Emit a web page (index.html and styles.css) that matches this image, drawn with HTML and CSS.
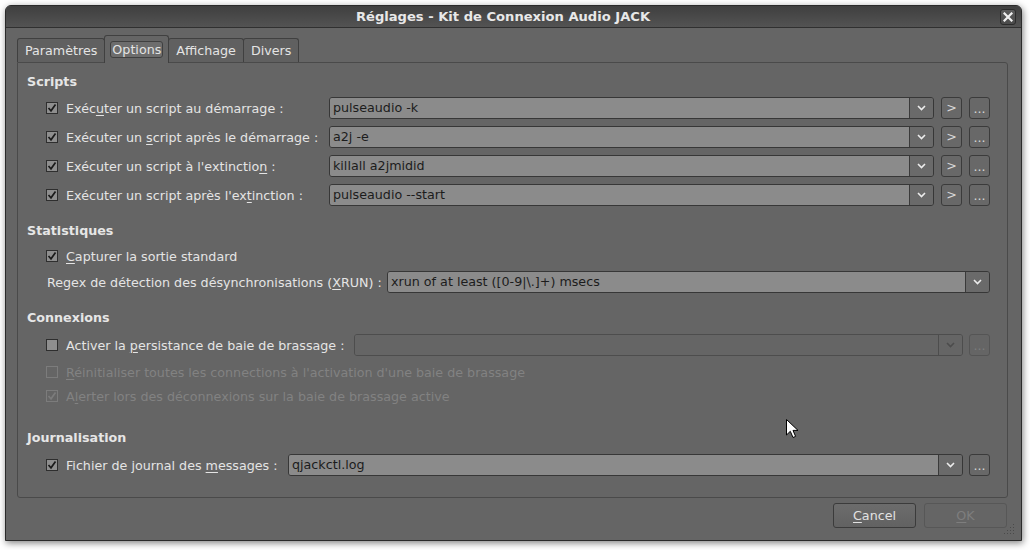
FILE: index.html
```html
<!DOCTYPE html>
<html lang="fr">
<head>
<meta charset="utf-8">
<title>Réglages - Kit de Connexion Audio JACK</title>
<link rel="stylesheet" href="styles.css">
</head>
<body>
<div class="window">
  <div class="titlebar">
    <span class="title">Réglages - Kit de Connexion Audio JACK</span>
    <span class="close"><svg width="10" height="10" viewBox="0 0 10 10"><path d="M1.5 1.5 L8.5 8.5 M8.5 1.5 L1.5 8.5" stroke="#f0f0f0" stroke-width="2.2" stroke-linecap="square"/></svg></span>
  </div>
  <div class="content">
    <div class="tabs">
      <div class="tab">Paramètres</div>
      <div class="tab active"><span class="focus">Options</span></div>
      <div class="tab">Affichage</div>
      <div class="tab">Divers</div>
    </div>
    <div class="panel">
      <div class="heading">Scripts</div>
      <div class="rows g-scripts">
        <label class="check"><svg class="cb" viewBox="0 0 12 12"><rect x="0.5" y="0.5" width="11" height="11"/><path d="M2.5 6 L5 8.8 L9.5 2.5"/></svg><span>Exéc<u>u</u>ter un script au démarrage :</span></label>
        <div class="combo"><span class="field">pulseaudio -k</span><span class="arrow"><svg width="9" height="6" viewBox="0 0 9 6"><path d="M1 1 L4.5 4.5 L8 1"/></svg></span></div>
        <button class="tb">&gt;</button>
        <button class="tb dots">...</button>

        <label class="check"><svg class="cb" viewBox="0 0 12 12"><rect x="0.5" y="0.5" width="11" height="11"/><path d="M2.5 6 L5 8.8 L9.5 2.5"/></svg><span>Exécuter un <u>s</u>cript après le démarrage :</span></label>
        <div class="combo"><span class="field">a2j -e</span><span class="arrow"><svg width="9" height="6" viewBox="0 0 9 6"><path d="M1 1 L4.5 4.5 L8 1"/></svg></span></div>
        <button class="tb">&gt;</button>
        <button class="tb dots">...</button>

        <label class="check"><svg class="cb" viewBox="0 0 12 12"><rect x="0.5" y="0.5" width="11" height="11"/><path d="M2.5 6 L5 8.8 L9.5 2.5"/></svg><span>Exécuter un script à l'extinctio<u>n</u> :</span></label>
        <div class="combo"><span class="field">killall a2jmidid</span><span class="arrow"><svg width="9" height="6" viewBox="0 0 9 6"><path d="M1 1 L4.5 4.5 L8 1"/></svg></span></div>
        <button class="tb">&gt;</button>
        <button class="tb dots">...</button>

        <label class="check"><svg class="cb" viewBox="0 0 12 12"><rect x="0.5" y="0.5" width="11" height="11"/><path d="M2.5 6 L5 8.8 L9.5 2.5"/></svg><span>Exécuter un script après l'ex<u>t</u>inction :</span></label>
        <div class="combo"><span class="field">pulseaudio --start</span><span class="arrow"><svg width="9" height="6" viewBox="0 0 9 6"><path d="M1 1 L4.5 4.5 L8 1"/></svg></span></div>
        <button class="tb">&gt;</button>
        <button class="tb dots">...</button>
      </div>

      <div class="heading h-stats">Statistiques</div>
      <label class="check row-single r-capture"><svg class="cb" viewBox="0 0 12 12"><rect x="0.5" y="0.5" width="11" height="11"/><path d="M2.5 6 L5 8.8 L9.5 2.5"/></svg><span><u>C</u>apturer la sortie standard</span></label>
      <div class="rows g-regex">
        <span class="plain">Regex de détection des désynchronisations (<u>X</u>RUN) :</span>
        <div class="combo"><span class="field">xrun of at least ([0-9|\.]+) msecs</span><span class="arrow"><svg width="9" height="6" viewBox="0 0 9 6"><path d="M1 1 L4.5 4.5 L8 1"/></svg></span></div>
      </div>

      <div class="heading h-conn">Connexions</div>
      <div class="rows g-persist">
        <label class="check"><svg class="cb off" viewBox="0 0 12 12"><rect x="0.5" y="0.5" width="11" height="11"/></svg><span>Activer la <u>p</u>ersistance de baie de brassage :</span></label>
        <div class="combo disabled"><span class="field"></span><span class="arrow"><svg width="9" height="6" viewBox="0 0 9 6"><path d="M1 1 L4.5 4.5 L8 1"/></svg></span></div>
        <button class="tb dots disabled">...</button>
      </div>
      <label class="check row-single r-reset dis"><svg class="cb" viewBox="0 0 12 12"><rect x="0.5" y="0.5" width="11" height="11"/></svg><span><u>R</u>éinitialiser toutes les connections à l'activation d'une baie de brassage</span></label>
      <label class="check row-single r-alert dis"><svg class="cb" viewBox="0 0 12 12"><rect x="0.5" y="0.5" width="11" height="11"/><path d="M2.5 6 L5 8.8 L9.5 2.5"/></svg><span>A<u>l</u>erter lors des déconnexions sur la baie de brassage active</span></label>

      <div class="heading h-log">Journalisation</div>
      <div class="rows g-log">
        <label class="check"><svg class="cb" viewBox="0 0 12 12"><rect x="0.5" y="0.5" width="11" height="11"/><path d="M2.5 6 L5 8.8 L9.5 2.5"/></svg><span>Fichier de journal des <u>m</u>essages :</span></label>
        <div class="combo"><span class="field">qjackctl.log</span><span class="arrow"><svg width="9" height="6" viewBox="0 0 9 6"><path d="M1 1 L4.5 4.5 L8 1"/></svg></span></div>
        <button class="tb dots">...</button>
      </div>
    </div>
    <div class="buttons">
      <button class="btn"><u>C</u>ancel</button>
      <button class="btn disabled"><u>O</u>K</button>
    </div>
  </div>
  <svg class="grip" width="12" height="12" viewBox="0 0 12 12">
    <rect x="9" y="0" width="1" height="1"/>
    <rect x="6" y="3" width="1" height="1"/><rect x="9" y="3" width="1" height="1"/>
    <rect x="3" y="6" width="1" height="1"/><rect x="6" y="6" width="1" height="1"/><rect x="9" y="6" width="1" height="1"/>
    <rect x="0" y="9" width="1" height="1"/><rect x="3" y="9" width="1" height="1"/><rect x="6" y="9" width="1" height="1"/><rect x="9" y="9" width="1" height="1"/>
  </svg>
</div>
<svg class="cursor" width="13" height="20" viewBox="0 0 13 20"><path d="M0.5 0.5 L0.5 16 L4.3 12.3 L7 18.5 L9.6 17.4 L7 11.4 L12 11.4 Z" fill="#ffffff" stroke="#000000" stroke-width="1" stroke-linejoin="round"/></svg>
</body>
</html>
```

FILE: styles.css
```css
* { box-sizing: border-box; }
html, body { margin: 0; padding: 0; background: #ffffff; }
body {
  font-family: "DejaVu Sans", "Noto Sans", sans-serif;
  font-size: 12.7px;
  color: #e4e4e4;
  width: 1030px;
  height: 550px;
  overflow: hidden;
}
u { text-decoration: underline; text-underline-offset: 2px; }

.window {
  margin: 5px 0 0 5px;
  width: 1017px;
  height: 536px;
  border: 1px solid #2a2a2a;
  border-radius: 6px 6px 0 0;
  background: #656565;
  display: flex;
  flex-direction: column;
  position: relative;
  box-shadow: 1px 2px 7px rgba(0, 0, 0, 0.5);
}
.titlebar {
  height: 22px;
  flex: none;
  display: flex;
  align-items: center;
  background: linear-gradient(#3f3f3f, #535353);
  border-bottom: 1px solid #303030;
  border-radius: 5px 5px 0 0;
  padding-right: 5px;
}
.title {
  flex: 1;
  text-align: center;
  font-weight: bold;
  font-size: 13.1px;
  color: #e8e8e8;
}
.close {
  width: 16px;
  height: 16px;
  border: 1px solid #2c2c2c;
  border-radius: 3px;
  background: linear-gradient(#5c5c5c, #4a4a4a);
  display: flex;
  align-items: center;
  justify-content: center;
}

.content {
  flex: 1;
  display: flex;
  flex-direction: column;
  padding: 7px 13px 12px 11px;
}
.tabs {
  display: flex;
  align-items: flex-end;
  height: 27px;
  flex: none;
}
.tab {
  height: 24px;
  padding: 0 7px;
  border: 1px solid #404040;
  border-bottom: none;
  border-radius: 3px 3px 0 0;
  background: #606060;
  display: flex;
  align-items: center;
  margin-right: -1px;
}
.tab.active {
  height: 28px;
  margin-bottom: -1px;
  background: #656565;
  position: relative;
  z-index: 1;
  padding: 0 5px 0 5px;
}
.focus {
  height: 17px;
  line-height: 15px;
  padding: 0 1px;
  border: 1px solid #404040;
  border-radius: 3px;
  background: #6d6d6d;
}

.panel {
  flex: 1;
  border: 1px solid #4a4a4a;
  border-radius: 0 3px 3px 3px;
  padding: 10px 17px 0 9px;
  display: flex;
  flex-direction: column;
}
.heading {
  font-weight: bold;
  height: 16px;
  line-height: 16px;
  margin-top: 1px;
  color: #e6e6e6;
}
.h-stats { margin-top: 17px; }
.h-conn { margin-top: 17px; }
.h-log { margin-top: 23px; }

.rows {
  display: grid;
  margin-left: 19px;
  column-gap: 7px;
  row-gap: 7px;
  grid-auto-rows: 22px;
  align-items: center;
  margin-top: 7px;
}
.g-scripts { grid-template-columns: 276px 1fr 21px 21px; }
.g-regex { grid-template-columns: 334px 1fr; margin-top: 4px; }
.g-persist { grid-template-columns: 302px 1fr 21px; column-gap: 6px; margin-top: 8px; }
.g-log { grid-template-columns: 236px 1fr 21px; column-gap: 6px; margin-top: 8px; }

.check {
  display: flex;
  align-items: center;
  gap: 8px;
  height: 22px;
  white-space: nowrap;
}
.row-single { margin-left: 19px; }
.r-capture { margin-top: 6px; }
.r-reset { margin-top: 5px; }
.r-alert { margin-top: 2px; }
.plain { padding-left: 1px; white-space: nowrap; }

.cb { width: 12px; height: 12px; flex: none; }
.cb rect { fill: #8e8e8e; stroke: #2e2e2e; stroke-width: 1; }
.cb path { fill: none; stroke: #1a1a1a; stroke-width: 1.7; }
.dis { color: #828282; }
.dis .cb rect { fill: none; stroke: #7c7c7c; }
.dis .cb path { stroke: #7c7c7c; }

.combo {
  display: flex;
  height: 22px;
  border: 1px solid #373737;
  border-radius: 3px;
  overflow: hidden;
}
.field {
  flex: 1;
  background: #8b8b8b;
  color: #1c1c1c;
  padding-left: 3px;
  line-height: 20px;
  white-space: nowrap;
  overflow: hidden;
}
.arrow {
  width: 24px;
  flex: none;
  background: #6a6a6a;
  border-left: 1px solid #3a3a3a;
  display: flex;
  align-items: center;
  justify-content: center;
}
.arrow path { fill: none; stroke: #ececec; stroke-width: 1.6; }
.combo.disabled { border-color: #4d4d4d; }
.combo.disabled .field { background: #656565; }
.combo.disabled .arrow { background: #656565; border-left-color: #4d4d4d; }
.combo.disabled .arrow path { stroke: #4c4c4c; }

.tb {
  height: 22px;
  width: 21px;
  padding: 0;
  border: 1px solid #3b3b3b;
  border-radius: 3px;
  background: #686868;
  color: #d8d8d8;
  font-family: inherit;
  font-size: 12.7px;
  line-height: 18px;
}
.tb.dots { line-height: 22px; }
.tb.disabled { border-color: #555555; color: #7c7c7c; background: #656565; }

.buttons {
  flex: none;
  display: flex;
  justify-content: flex-end;
  gap: 8px;
  margin-top: 5px;
  padding-right: 1px;
}
.btn {
  width: 83px;
  height: 25px;
  border: 1px solid #3b3b3b;
  border-radius: 3px;
  background: linear-gradient(#6c6c6c, #626262);
  color: #e2e2e2;
  font-family: inherit;
  font-size: 12.7px;
}
.btn.disabled {
  border-color: #575757;
  background: #656565;
  color: #7e7e7e;
}

.grip { position: absolute; right: 5px; bottom: 4px; }
.grip rect { fill: #4a4a4a; }
.cursor { position: absolute; left: 786px; top: 419px; }
```
